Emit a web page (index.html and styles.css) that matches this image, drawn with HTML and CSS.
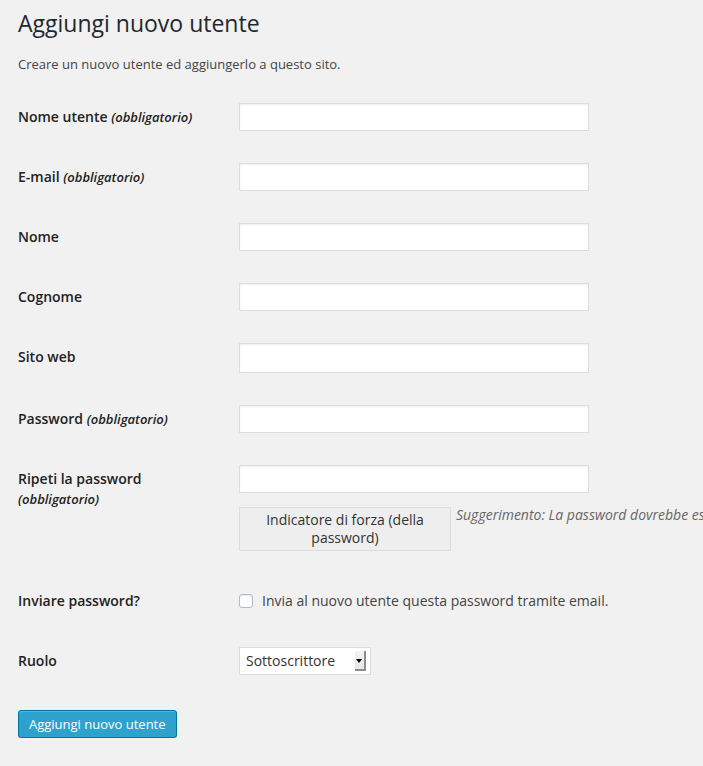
FILE: index.html
```html
<!DOCTYPE html>
<html lang="it">
<head>
    <meta charset="UTF-8">
    <title>Aggiungi nuovo utente</title>
    <link rel="stylesheet" href="styles.css">
</head>
<body>

<div class="wrap">
    <h1 class="title">Aggiungi nuovo utente</h1>
    <p class="intro">Creare un nuovo utente ed aggiungerlo a questo sito.</p>

    <form class="user-form" onsubmit="return false">
        <div class="row">
            <label class="label" for="user_login">Nome utente <span class="req">(obbligatorio)</span></label>
            <div class="field"><input type="text" id="user_login" class="text-input"></div>
        </div>
        <div class="row">
            <label class="label" for="email">E-mail <span class="req">(obbligatorio)</span></label>
            <div class="field"><input type="text" id="email" class="text-input"></div>
        </div>
        <div class="row">
            <label class="label" for="first_name">Nome</label>
            <div class="field"><input type="text" id="first_name" class="text-input"></div>
        </div>
        <div class="row">
            <label class="label" for="last_name">Cognome</label>
            <div class="field"><input type="text" id="last_name" class="text-input"></div>
        </div>
        <div class="row">
            <label class="label" for="url">Sito web</label>
            <div class="field"><input type="text" id="url" class="text-input url-input"></div>
        </div>
        <div class="row">
            <label class="label" for="pass1">Password <span class="req">(obbligatorio)</span></label>
            <div class="field"><input type="password" id="pass1" class="text-input"></div>
        </div>
        <div class="row">
            <label class="label" for="pass2">Ripeti la password <span class="req">(obbligatorio)</span></label>
            <div class="field">
                <input type="password" id="pass2" class="text-input">
                <div class="strength-row">
                    <div class="strength">Indicatore di forza (della password)</div>
                    <p class="hint">Suggerimento: La password dovrebbe essere lunga almeno sette caratteri. Per renderla più sicura utilizza lettere maiuscole e minuscole, numeri e simboli come ! " ? $ % ^ &amp; ).</p>
                </div>
            </div>
        </div>
        <div class="row">
            <div class="label">Inviare password?</div>
            <div class="field check-field">
                <label class="check-label"><input type="checkbox" class="check"> Invia al nuovo utente questa password tramite email.</label>
            </div>
        </div>
        <div class="row">
            <label class="label" for="role">Ruolo</label>
            <div class="field">
                <div class="select-wrap">
                    <select id="role" class="select">
                        <option>Sottoscrittore</option>
                        <option>Collaboratore</option>
                        <option>Autore</option>
                        <option>Editore</option>
                        <option>Amministratore</option>
                    </select>
                    <span class="select-arrow"></span>
                </div>
            </div>
        </div>

        <p class="submit">
            <button type="submit" class="button-primary">Aggiungi nuovo utente</button>
        </p>
    </form>
</div>

</body>
</html>
```

FILE: styles.css
```css
html, body {
    overflow: hidden;
}

body {
    margin: 0;
    font-family: 'Open Sans', sans-serif;
    font-size: 13px;
    background-color: #f1f1f1;
    color: #444;
}

.wrap {
    padding-left: 18px;
}

.title {
    margin: 0;
    padding: 9px 0 4px;
    font-size: 23px;
    font-weight: 400;
    line-height: 29px;
    color: #23282d;
}

.intro {
    margin: 12px 0 13px;
    line-height: 20px;
}

.row {
    display: grid;
    grid-template-columns: 210px 1fr;
}

.label {
    padding: 20px 10px 20px 0;
    font-size: 14px;
    font-weight: 600;
    line-height: 1.4;
    color: #222;
}

.req {
    font-size: 13px;
    font-style: italic;
}

.field {
    padding: 15px 10px;
    min-width: 0;
}

.text-input {
    display: block;
    box-sizing: border-box;
    width: 350px;
    height: 28px;
    margin: 1px;
    padding: 3px 5px;
    border: 1px solid #ddd;
    background-color: #fff;
    box-shadow: inset 0 1px 2px rgba(0, 0, 0, 0.07);
    font-family: inherit;
    font-size: 14px;
    color: #333;
    outline: none;
}

.url-input {
    height: 30px;
}

.strength-row {
    display: flex;
    align-items: flex-start;
}

.strength {
    flex: none;
    width: 200px;
    margin: 13px 5px 5px 1px;
    padding: 3px 5px;
    border: 1px solid #ddd;
    background-color: #eee;
    text-align: center;
    font-size: 14px;
    line-height: 18px;
    color: #333;
}

.hint {
    margin: 11px 0 0;
    white-space: nowrap;
    font-size: 14px;
    font-style: italic;
    line-height: 20px;
    color: #666;
}

.check-field {
    height: 29px;
}

.check-label {
    display: flex;
    align-items: center;
    gap: 9px;
    height: 29px;
    font-size: 14px;
    color: #444;
}

.check {
    appearance: none;
    width: 14px;
    height: 14px;
    margin: 0 0 0 1px;
    border: 1px solid #b4b9be;
    border-radius: 3px;
    background: #fff;
    box-shadow: inset 0 1px 2px rgba(0, 0, 0, 0.1);
}

.select-wrap {
    position: relative;
    display: inline-block;
    margin: 1px;
}

.select {
    appearance: none;
    display: block;
    box-sizing: border-box;
    width: 132px;
    height: 28px;
    margin: 0;
    padding: 2px 6px;
    border: 1px solid #ddd;
    border-radius: 0;
    background-color: #fff;
    font-family: inherit;
    font-size: 14px;
    color: #333;
    outline: none;
}

.select-arrow {
    position: absolute;
    top: 4px;
    right: 5px;
    width: 9px;
    height: 18px;
    border-right: 2px solid #8c8c8c;
    border-bottom: 2px solid #8c8c8c;
    background: linear-gradient(#f4f4f4, #e6e6e6);
    pointer-events: none;
}

.select-arrow::after {
    content: "";
    position: absolute;
    top: 8px;
    left: 1px;
    border-left: 3.5px solid transparent;
    border-right: 3.5px solid transparent;
    border-top: 4px solid #000;
}

.submit {
    margin: 19px 0 0;
}

.button-primary {
    height: 28px;
    padding: 0 10px;
    border: 1px solid #0074a2;
    border-radius: 3px;
    background-color: #2ea2cc;
    box-shadow: inset 0 1px 0 rgba(120, 200, 230, 0.5), 0 1px 0 rgba(0, 0, 0, 0.15);
    font-family: inherit;
    font-size: 13px;
    line-height: 26px;
    color: #fff;
    cursor: pointer;
}

.button-primary:hover {
    background-color: #1e8cbe;
}
```
